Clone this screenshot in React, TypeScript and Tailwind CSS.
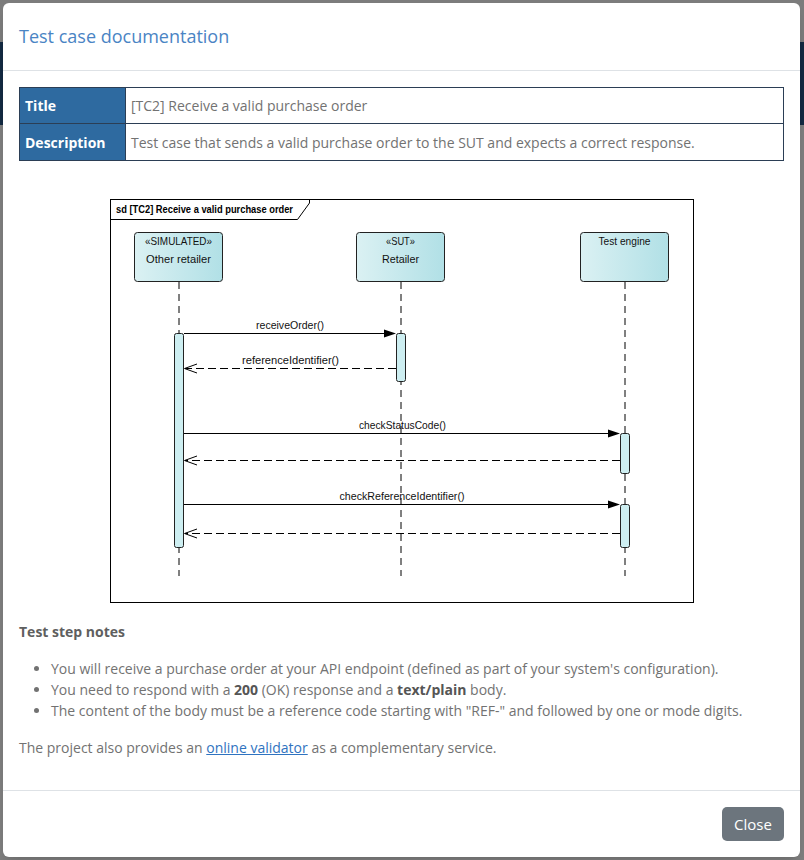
import React from "react"

const font = { fontFamily: '"Open Sans", "Liberation Sans", sans-serif' }

function Lifeline({ x, lines }: { x: number; lines: { text: string; y: number; len: number }[] }) {
  return (
    <g>
      <line x1={x + 0.5} y1={282} x2={x + 0.5} y2={576} stroke="#000" strokeDasharray="7 5" />
      <rect x={x - 44} y={232.5} width={88} height={49} rx={3} fill="url(#lifeGrad)" stroke="#222" />
      {lines.map((l) => (
        <text key={l.text} x={x} y={l.y} textAnchor="middle" fontSize={10.5} textLength={l.len} lengthAdjust="spacingAndGlyphs" fill="#111">
          {l.text}
        </text>
      ))}
    </g>
  )
}

function Call({ y, to, label, cx, len }: { y: number; to: number; label: string; cx: number; len: number }) {
  return (
    <g>
      <line x1={184} y1={y} x2={to - 10} y2={y} stroke="#000" />
      <polygon points={`${to},${y} ${to - 12},${y - 4} ${to - 12},${y + 4}`} fill="#000" />
      <text x={cx} y={y - 4.5} textAnchor="middle" fontSize={10.5} textLength={len} lengthAdjust="spacingAndGlyphs" fill="#111">
        {label}
      </text>
    </g>
  )
}

function Reply({ y, from, label, cx, len }: { y: number; from: number; label?: string; cx?: number; len?: number }) {
  return (
    <g>
      <line x1={from} y1={y} x2={185} y2={y} stroke="#000" strokeDasharray="8 4" />
      <polyline points={`197,${y - 4.5} 184.5,${y} 197,${y + 4.5}`} fill="none" stroke="#000" />
      {label && (
        <text x={cx} y={y - 4.5} textAnchor="middle" fontSize={10.5} textLength={len} lengthAdjust="spacingAndGlyphs" fill="#111">
          {label}
        </text>
      )}
    </g>
  )
}

function SequenceDiagram() {
  return (
    <svg width={585} height={405} viewBox="110 199 585 405" style={{ fontFamily: '"Liberation Sans", Arial, sans-serif' }}>
      <defs>
        <linearGradient id="lifeGrad" x1="0" y1="0" x2="1" y2="0">
          <stop offset="0" stopColor="#dbf1f3" />
          <stop offset="1" stopColor="#b1e0e6" />
        </linearGradient>
      </defs>
      <rect x={110.5} y={199.5} width={583} height={403} fill="#fff" stroke="#000" />
      <polyline points="110.5,219.5 297.5,219.5 309.5,203 309.5,199.5" fill="none" stroke="#000" />
      <text x={116} y={212.5} fontSize={10} fontWeight={700} textLength={177} lengthAdjust="spacingAndGlyphs" fill="#000">
        sd [TC2] Receive a valid purchase order
      </text>

      <Lifeline x={178.5} lines={[{ text: "«SIMULATED»", y: 245, len: 67 }, { text: "Other retailer", y: 262.5, len: 65 }]} />
      <Lifeline x={400.5} lines={[{ text: "«SUT»", y: 245, len: 29 }, { text: "Retailer", y: 262.5, len: 37 }]} />
      <Lifeline x={624.5} lines={[{ text: "Test engine", y: 245, len: 52 }]} />

      {/* activations */}
      <rect x={174.5} y={333.5} width={9} height={214} rx={2} fill="#cdeef1" stroke="#222" />
      <rect x={396.5} y={333.5} width={9} height={48} rx={2} fill="#cdeef1" stroke="#222" />
      <rect x={620.5} y={433.5} width={9} height={40} rx={2} fill="#cdeef1" stroke="#222" />
      <rect x={620.5} y={504.5} width={9} height={43} rx={2} fill="#cdeef1" stroke="#222" />

      <Call y={333.5} to={396} label="receiveOrder()" cx={290} len={68} />
      <Reply y={368.5} from={396} label="referenceIdentifier()" cx={290.5} len={97} />
      <Call y={433.5} to={620} label="checkStatusCode()" cx={402.5} len={87} />
      <Reply y={460.5} from={620} />
      <Call y={504.5} to={620} label="checkReferenceIdentifier()" cx={402} len={125} />
      <Reply y={533.5} from={620} />
    </svg>
  )
}

export default function App() {
  return (
    <div className="relative h-[860px] w-[804px] overflow-hidden bg-[#7c7c7c]" style={font}>
      {/* dimmed page behind the dialog */}
      <div className="h-[42px]" />
      <div className="h-[83px] bg-[#132a42]" />
      <div className="h-[735px] bg-[#7f7f7f]" />

      {/* dialog */}
      <div className="absolute left-[3px] top-[3px] flex h-[854px] w-[797px] flex-col rounded-md bg-white shadow-lg">
        <div className="flex h-[68px] items-center border-b border-[#dee2e6] px-4">
          <h5 className="text-[18px] leading-[27px] text-[#4a84c4]">Test case documentation</h5>
        </div>

        <div className="flex-1 p-4 text-[14px] leading-[21px] text-[#727272]">
          <table className="w-full border-collapse border border-[#2b3e55]">
            <tbody>
              <tr className="h-[36px]">
                <td className="w-[106px] border border-[#2b3e55] bg-[#2e6aa0] px-[5px] font-bold text-white">Title</td>
                <td className="border border-[#2b3e55] px-[5px]">[TC2] Receive a valid purchase order</td>
              </tr>
              <tr className="h-[37px]">
                <td className="border border-[#2b3e55] bg-[#2e6aa0] px-[5px] font-bold text-white">Description</td>
                <td className="border border-[#2b3e55] px-[5px]">
                  Test case that sends a valid purchase order to the SUT and expects a correct response.
                </td>
              </tr>
            </tbody>
          </table>

          <div className="mb-[17px] mt-[38px] flex pl-[91px]">
            <SequenceDiagram />
          </div>

          <p className="mb-4 font-bold text-[#5f5f5f]">Test step notes</p>
          <ul className="mb-4 list-disc pl-8 marker:text-[#727272]">
            <li>You will receive a purchase order at your API endpoint (defined as part of your system's configuration).</li>
            <li>
              You need to respond with a <b className="text-[#555]">200</b> (OK) response and a{" "}
              <b className="text-[#555]">text/plain</b> body.
            </li>
            <li>The content of the body must be a reference code starting with "REF-" and followed by one or mode digits.</li>
          </ul>
          <p>
            The project also provides an{" "}
            <a href="#" className="text-[#2f73c0] underline">
              online validator
            </a>{" "}
            as a complementary service.
          </p>
        </div>

        <div className="flex h-[67px] items-center justify-end border-t border-[#dee2e6] px-4">
          <button className="h-[34px] w-[62px] rounded-[5px] bg-[#6c757d] text-[15px] text-white">Close</button>
        </div>
      </div>
    </div>
  )
}
